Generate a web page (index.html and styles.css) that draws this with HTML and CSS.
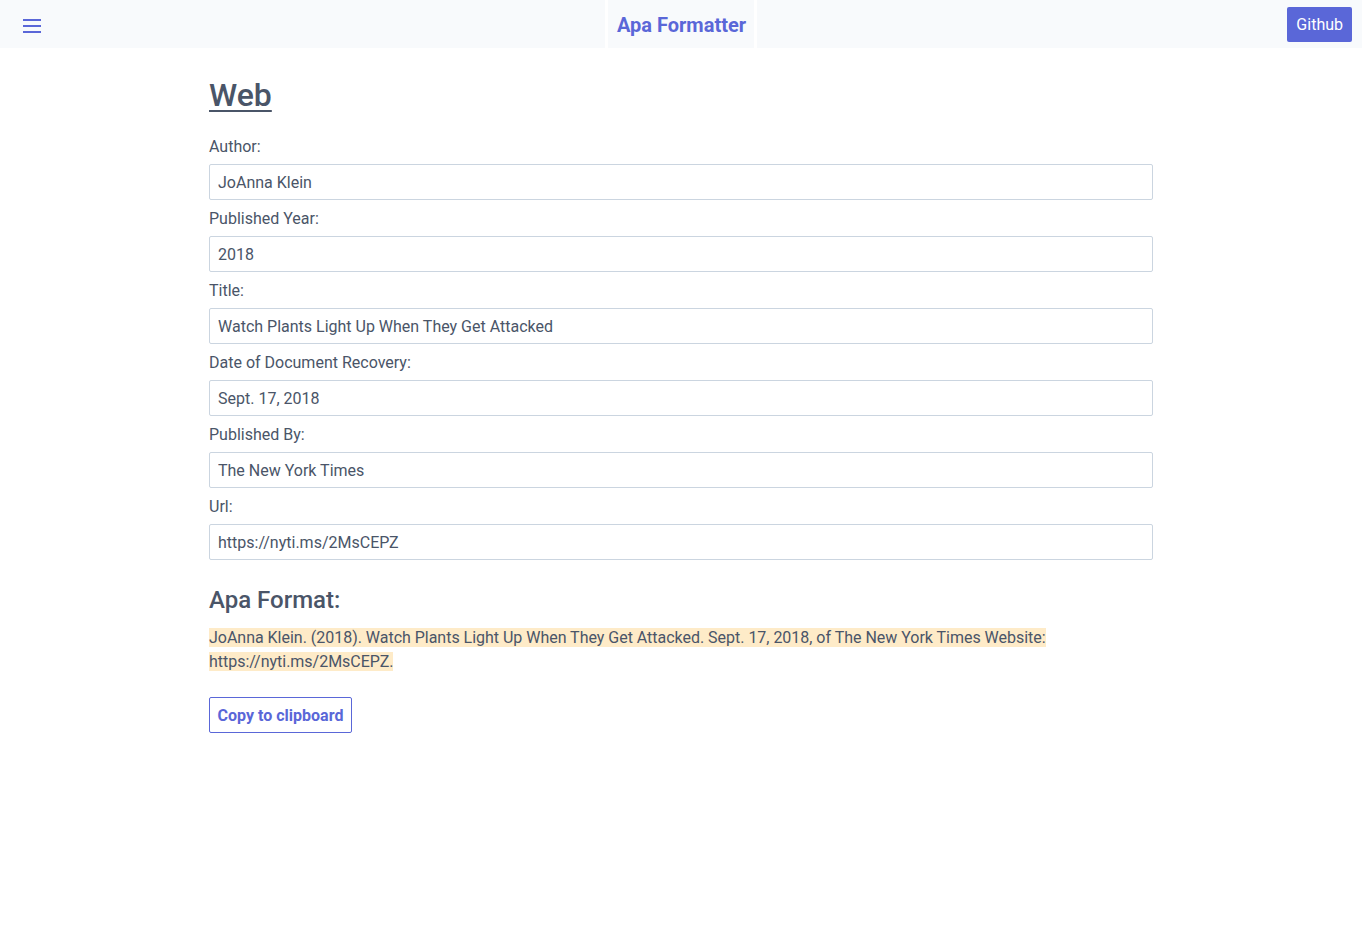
FILE: index.html
```html
<!DOCTYPE html>
<html lang="en">
<head>
<meta charset="utf-8">
<title>Apa Formatter</title>
<link rel="stylesheet" href="styles.css">
</head>
<body>
<header class="topbar">
  <div class="bar-side bar-left">
    <button class="menu-btn" aria-label="Menu">
      <svg width="18" height="14" viewBox="0 0 18 14"><path d="M0 1h18M0 7h18M0 13h18" stroke="#5a67d8" stroke-width="2" fill="none"/></svg>
    </button>
  </div>
  <div class="bar-title">Apa Formatter</div>
  <div class="bar-side bar-right">
    <a class="github-btn" href="#">Github</a>
  </div>
</header>
<main class="content">
  <h1 class="page-title">Web</h1>
  <form class="form">
    <label class="field-label">Author:</label>
    <input class="field-input" type="text" value="JoAnna Klein">
    <label class="field-label">Published Year:</label>
    <input class="field-input" type="text" value="2018">
    <label class="field-label">Title:</label>
    <input class="field-input" type="text" value="Watch Plants Light Up When They Get Attacked">
    <label class="field-label">Date of Document Recovery:</label>
    <input class="field-input" type="text" value="Sept. 17, 2018">
    <label class="field-label">Published By:</label>
    <input class="field-input" type="text" value="The New York Times">
    <label class="field-label">Url:</label>
    <input class="field-input" type="text" value="https://nyti.ms/2MsCEPZ">
  </form>
  <h2 class="result-title">Apa Format:</h2>
  <p class="result"><span class="result-mark">JoAnna Klein. (2018). Watch Plants Light Up When They Get Attacked. Sept. 17, 2018, of The New York Times Website: https://nyti.ms/2MsCEPZ.</span></p>
  <button class="copy-btn" type="button">Copy to clipboard</button>
</main>
</body>
</html>
```

FILE: styles.css
```css
* { box-sizing: border-box; }
html, body { margin: 0; padding: 0; background: #fff; }
body {
  font-family: Roboto, "Liberation Sans", sans-serif;
  color: #4a5568;
  font-size: 16px;
  line-height: 24px;
}
.topbar {
  display: grid;
  grid-template-columns: 1fr auto 1fr;
  column-gap: 3px;
  height: 48px;
  background: #fff;
}
.bar-side {
  background: #f8fafc;
  display: flex;
  align-items: center;
}
.bar-left { padding-left: 23px; }
.bar-right { justify-content: flex-end; padding-right: 10px; padding-top: 1px; }
.menu-btn {
  border: 0;
  background: transparent;
  padding: 0;
  margin-top: 4px;
  display: flex;
  cursor: pointer;
}
.bar-title {
  background: #f8fafc;
  color: #5a67d8;
  font-weight: 700;
  font-size: 20px;
  line-height: 46px;
  padding: 2px 8px 0 9px;
}
.github-btn {
  background: #5a67d8;
  color: #fff;
  text-decoration: none;
  border-radius: 2px;
  padding: 6px 9px 5px;
  font-size: 16px;
  line-height: 24px;
}
.content {
  width: 944px;
  margin: 0 auto;
  padding-bottom: 40px;
}
.page-title {
  margin: 29px 0 15px;
  font-size: 32px;
  line-height: 36px;
  font-weight: 500;
  text-decoration: underline;
  text-decoration-thickness: 2px;
  text-underline-offset: 4px;
  color: #4a5568;
}
.form { display: flex; flex-direction: column; }
.field-label {
  display: block;
  padding: 7px 0 5px;
  line-height: 24px;
}
.field-input {
  display: block;
  width: 100%;
  height: 36px;
  border: 1px solid #cbd5e0;
  border-radius: 2px;
  padding: 0 8px;
  font: inherit;
  color: #4a5568;
  background: #fff;
}
.result-title {
  margin: 22px 0 8px;
  font-size: 24px;
  line-height: 36px;
  font-weight: 500;
  color: #4a5568;
}
.result {
  margin: 0 0 23px;
  line-height: 24px;
  letter-spacing: -0.02px;
}
.result-mark {
  background: #feebc8;
}
.copy-btn {
  display: block;
  font: inherit;
  font-weight: 700;
  color: #5a67d8;
  background: #fff;
  border: 1px solid #5a67d8;
  border-radius: 2px;
  height: 36px;
  width: 143px;
  padding: 1px 0 0;
  text-align: center;
  cursor: pointer;
}
```
